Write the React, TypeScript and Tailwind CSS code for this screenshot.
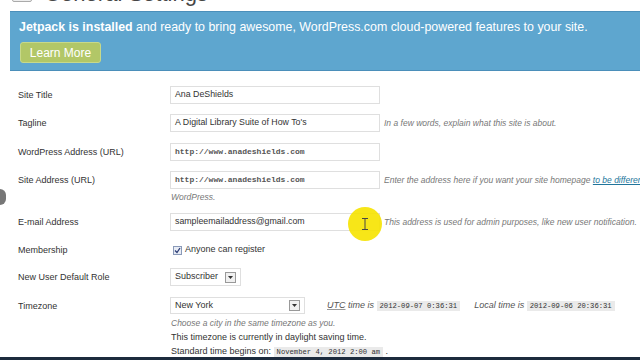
import React from 'react';

const sans = { fontFamily: '"Liberation Sans", Arial, sans-serif' };

// Label column + field column, one settings row
const Row: React.FC<{ label: string; className?: string; children: React.ReactNode }> = ({ label, className, children }) => (
  <div className={`flex items-start ${className ?? ''}`}>
    <div className="w-[152px] shrink-0 pt-[2px] text-[9px] leading-[14px] text-[#333]">{label}</div>
    <div className="flex-1 min-w-0">{children}</div>
  </div>
);

const TextInput: React.FC<{ value: string; mono?: boolean }> = ({ value, mono }) => (
  <div
    className={`h-[18px] w-[210px] shrink-0 border border-[#dfdfdf] bg-white px-[4px] flex items-center ${
      mono ? 'font-["Liberation_Mono",monospace] text-[8px] font-bold text-[#555]' : 'text-[8.8px] text-[#333]'
    }`}
  >
    {value}
  </div>
);

const Hint: React.FC<{ children: React.ReactNode }> = ({ children }) => (
  <span className="ml-[4px] italic text-[8.5px] text-[#777] whitespace-nowrap">{children}</span>
);

const Code: React.FC<{ children: React.ReactNode }> = ({ children }) => (
  <code className='bg-[#eaeaea] px-[3px] py-[1px] font-["Liberation_Mono",monospace] text-[7.2px] text-[#333] not-italic'>{children}</code>
);

const DropArrow = () => (
  <span className="inline-flex h-[11px] w-[11px] items-center justify-center border border-[#999] bg-[#f0f0f0]">
    <svg width="5" height="3" viewBox="0 0 5 3">
      <path d="M0 0 L5 0 L2.5 3 Z" fill="#333" />
    </svg>
  </span>
);

export default function App() {
  return (
    <div className="relative h-[360px] w-[640px] overflow-hidden bg-white flex flex-col" style={sans}>
      {/* Header, mostly scrolled off */}
      <div className="flex items-center gap-[12px] pl-[12px] -mt-[15px] h-[18px]">
        <div className="h-[16px] w-[20px] border border-[#aaa] bg-[#eee] rounded-[2px]" />
        <span className="text-[22px] text-[#464646] leading-none">General Settings</span>
      </div>

      {/* Jetpack banner */}
      <div className="ml-[10px] mt-[8px] h-[60px] w-[660px] shrink-0 bg-[#5ea6cf] border-y border-[#4b8fba] pl-[9px] pt-[7px]">
        <div className="text-[12.4px] text-white leading-[16px] whitespace-nowrap">
          <b>Jetpack is installed</b> and ready to bring awesome, WordPress.com cloud-powered features to your site.
        </div>
        <div className="mt-[7px] inline-flex h-[21px] w-[81px] items-center justify-center rounded-[3px] border border-[#c7d98a] bg-[#b2c767] text-[12px] text-white ml-[1px]">
          Learn More
        </div>
      </div>

      {/* Settings form */}
      <div className="pl-[18px] pt-[15px] flex flex-col">
        <Row label="Site Title">
          <TextInput value="Ana DeShields" />
        </Row>
        <Row label="Tagline" className="mt-[10px]">
          <div className="flex items-center">
            <TextInput value="A Digital Library Suite of How To's" />
            <Hint>In a few words, explain what this site is about.</Hint>
          </div>
        </Row>
        <Row label="WordPress Address (URL)" className="mt-[11px]">
          <TextInput value="http://www.anadeshields.com" mono />
        </Row>
        <Row label="Site Address (URL)" className="mt-[10px]">
          <div className="flex items-center">
            <TextInput value="http://www.anadeshields.com" mono />
            <Hint>
              Enter the address here if you want your site homepage{' '}
              <span className="text-[#21759b] underline">to be different from the directory</span>
            </Hint>
          </div>
          <div className="mt-[1px] pl-[1px] italic text-[8.5px] leading-[14px] text-[#777]">WordPress.</div>
        </Row>
        <Row label="E-mail Address" className="mt-[9px]">
          <div className="flex items-center">
            <TextInput value="sampleemailaddress@gmail.com" />
            <Hint>This address is used for admin purposes, like new user notification.</Hint>
          </div>
        </Row>
        <Row label="Membership" className="mt-[10px]">
          <div className="flex items-center gap-[3px] pl-[3px] h-[18px] text-[9px] text-[#333]">
            <span className="inline-flex h-[9px] w-[9px] items-center justify-center border border-[#8a9ab8] bg-[#e8ecf5]">
              <svg width="7" height="7" viewBox="0 0 7 7">
                <path d="M1 3.5 L3 5.5 L6 1" stroke="#2d3f77" strokeWidth="1.3" fill="none" />
              </svg>
            </span>
            Anyone can register
          </div>
        </Row>
        <Row label="New User Default Role" className="mt-[9px]">
          <div className="flex h-[18px] w-[71px] items-center justify-between border border-[#dfdfdf] px-[4px] text-[9px] text-[#333]">
            Subscriber
            <DropArrow />
          </div>
        </Row>
        <Row label="Timezone" className="mt-[11px]">
          <div className="flex items-center">
            <div className="flex h-[17px] w-[135px] shrink-0 items-center justify-between border border-[#dfdfdf] px-[4px] text-[9px] text-[#333]">
              New York
              <DropArrow />
            </div>
            <span className="ml-[22px] italic text-[9px] text-[#555] whitespace-nowrap">
              <span className="underline decoration-[#999]">UTC</span> time is <Code>2012-09-07 0:36:31</Code>
            </span>
            <span className="ml-[14px] italic text-[9px] text-[#555] whitespace-nowrap">
              Local time is <Code>2012-09-06 20:36:31</Code>
            </span>
          </div>
          <div className="mt-[2px] pl-[1px] italic text-[8.5px] leading-[14px] text-[#777]">
            Choose a city in the same timezone as you.
          </div>
          <div className="pl-[1px] text-[9px] leading-[14px] text-[#333]">This timezone is currently in daylight saving time.</div>
          <div className="pl-[1px] text-[9px] leading-[14px] text-[#333]">
            Standard time begins on: <Code>November 4, 2012 2:00 am</Code> .
          </div>
        </Row>
      </div>

      {/* Collapsed-menu arrow on the left edge */}
      <div className="absolute left-0 top-[189px] h-[16px] w-[6px] rounded-r-full bg-[#555] opacity-80" />

      {/* Cursor highlight */}
      <div className="absolute left-[348px] top-[207px] h-[34px] w-[34px] rounded-full bg-[#f7e400] opacity-90 flex items-center justify-center">
        <svg width="6" height="12" viewBox="0 0 6 12">
          <path d="M0 0.5 H6 M3 0.5 V11.5 M0 11.5 H6" stroke="#333" strokeWidth="1" fill="none" />
        </svg>
      </div>

      {/* Bottom edge of the screen */}
      <div className="absolute bottom-0 left-0 h-[3px] w-full bg-[#1d2b3d]" />
    </div>
  );
}
